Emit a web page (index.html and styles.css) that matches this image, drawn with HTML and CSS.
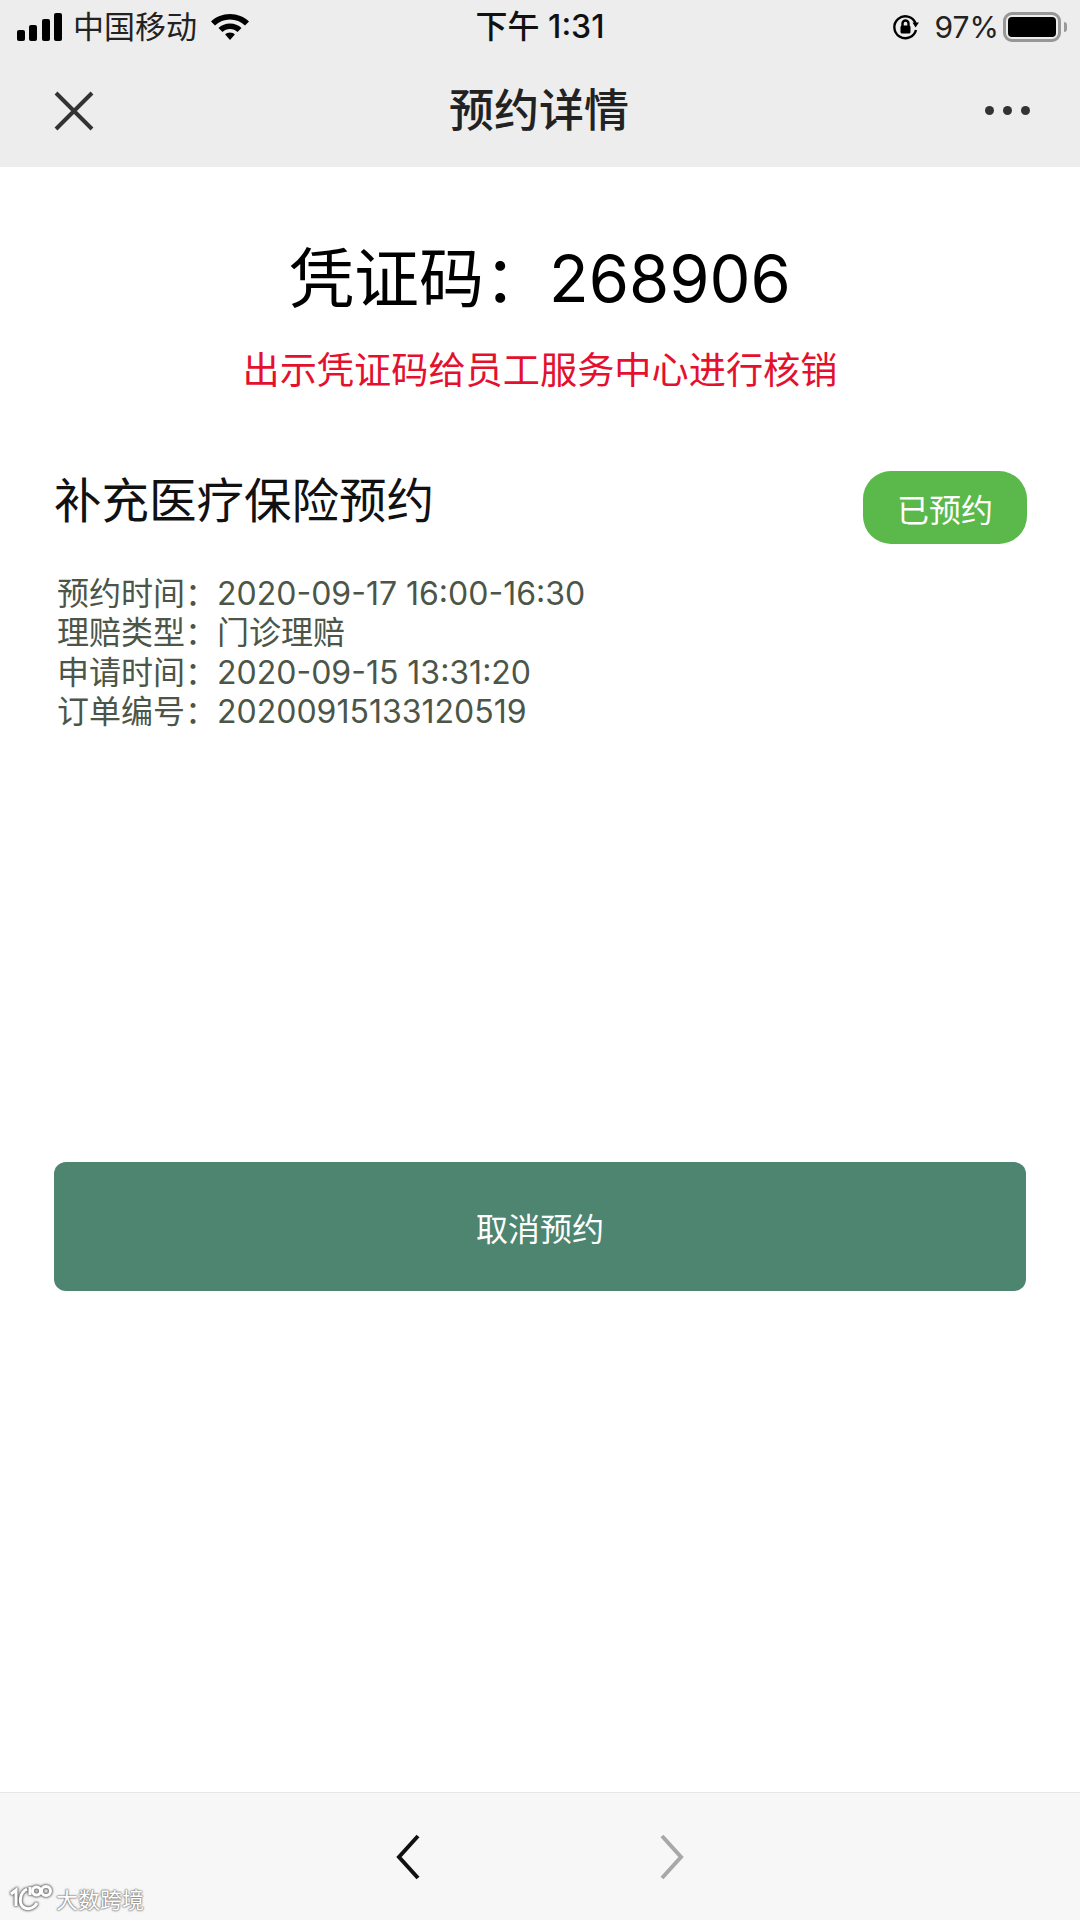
FILE: index.html
```html
<!DOCTYPE html>
<html lang="zh-CN">
<head>
    <meta charset="UTF-8">
    <meta name="viewport" content="width=device-width, initial-scale=1.0">
    <title>预约详情</title>
    <link rel="stylesheet" href="styles.css">
</head>
<body>
    <div class="top-bar">
        <div class="status-bar">
            <div class="status-left">
                <svg class="signal" width="46" height="28" viewBox="0 0 46 28">
                    <rect x="0" y="17" width="8" height="11" rx="2"/>
                    <rect x="12" y="12" width="8" height="16" rx="2"/>
                    <rect x="25" y="6" width="8" height="22" rx="2"/>
                    <rect x="37" y="0" width="8" height="28" rx="2"/>
                </svg>
                <span class="carrier">中国移动</span>
                <svg class="wifi" width="40" height="30" viewBox="0 0 40 30">
                    <path d="M20 2C12.500 2 6 4.800 1 9.500L5 13.500C9 9.800 14.200 7.500 20 7.500S31 9.800 35 13.500L39 9.500C34 4.800 27.500 2 20 2Z"/>
                    <path d="M20 11.500C15.500 11.500 11.500 13.200 8.500 16L12.500 20C14.500 18.200 17.100 17 20 17S25.500 18.200 27.500 20L31.500 16C28.500 13.200 24.500 11.500 20 11.500Z"/>
                    <path d="M20 20.500C18.100 20.500 16.400 21.200 15.200 22.400L20 28L24.800 22.400C23.600 21.200 21.900 20.500 20 20.500Z"/>
                </svg>
            </div>
            <div class="status-time">下午 1:31</div>
            <div class="status-right">
                <svg class="rotation-lock" width="28" height="28" viewBox="0 0 28 28">
                    <path class="rotation-ring" d="M23.500 10A11 11 0 1 0 24 17"/>
                    <path d="M20.500 9.500H27L23.500 14.500Z"/>
                    <rect x="8.500" y="12.500" width="10" height="8" rx="1.500"/>
                    <path class="rotation-ring" d="M10.500 13V10.500A3 3 0 0 1 16.500 10.500V13"/>
                </svg>
                <span class="battery-text">97%</span>
                <div class="battery">
                    <div class="battery-body"><div class="battery-level"></div></div>
                    <div class="battery-nub"></div>
                </div>
            </div>
        </div>
        <div class="nav-bar">
            <svg class="nav-close" width="40" height="40" viewBox="0 0 40 40">
                <path d="M2 2L38 38M38 2L2 38"/>
            </svg>
            <div class="nav-title">预约详情</div>
            <div class="nav-more"><span></span><span></span><span></span></div>
        </div>
    </div>

    <div class="content">
        <div class="code-title">凭证码：<span class="code-num">268906</span></div>
        <div class="code-tip">出示凭证码给员工服务中心进行核销</div>

        <div class="item-head">
            <div class="item-name">补充医疗保险预约</div>
            <div class="item-badge">已预约</div>
        </div>

        <div class="info-list">
            <div class="info-row"><span class="info-label">预约时间：</span><span class="info-value">2020-09-17 16:00-16:30</span></div>
            <div class="info-row"><span class="info-label">理赔类型：</span><span class="info-value">门诊理赔</span></div>
            <div class="info-row"><span class="info-label">申请时间：</span><span class="info-value">2020-09-15 13:31:20</span></div>
            <div class="info-row"><span class="info-label">订单编号：</span><span class="info-value">20200915133120519</span></div>
        </div>

        <div class="cancel-btn">取消预约</div>
    </div>

    <div class="bottom-bar">
        <svg class="nav-arrow" width="28" height="48" viewBox="0 0 28 48">
            <path d="M25 3L6 24L25 45"/>
        </svg>
        <svg class="nav-arrow disabled" width="28" height="48" viewBox="0 0 28 48">
            <path d="M3 3L22 24L3 45"/>
        </svg>
    </div>

    <!-- watermark over the bottom bar -->
    <div class="watermark">
        <svg width="44" height="28" viewBox="0 0 44 28">
            <path d="M2 10L7 6V22"/>
            <path d="M18 5C10 9 9 21 16 24C21 26 26 23 28 19"/>
            <path d="M21 3V11"/>
            <circle cx="27.500" cy="7" r="4"/>
            <circle cx="37" cy="7" r="4.500"/>
        </svg>
        <span>大数跨境</span>
    </div>
</body>
</html>
```

FILE: styles.css
```css
* {
    box-sizing: border-box;
    margin: 0;
    padding: 0;
}

body {
    width: 1080px;
    height: 1920px;
    position: relative;
    display: flex;
    flex-direction: column;
    background: #fff;
    font-family: Inter, "Noto Sans CJK SC", sans-serif;
    overflow: hidden;
}

.top-bar {
    height: 167px;
    background: #ededed;
}

/* status bar */
.status-bar {
    height: 54px;
    display: grid;
    grid-template-columns: 1fr auto 1fr;
    align-items: center;
    padding: 0 13px 0 17px;
    color: #000;
}

.status-left {
    display: flex;
    align-items: center;
}

.signal {
    margin-right: 10px;
}

.carrier {
    font-size: 31px;
    line-height: 36px;
    color: #222;
}

.wifi {
    margin-left: 13px;
}

.status-time {
    font-size: 32px;
    line-height: 36px;
    font-weight: 500;
    color: #111;
    margin-right: 4px;
}

.status-right {
    display: flex;
    align-items: center;
    justify-content: flex-end;
}

.rotation-lock {
    margin-right: 15px;
}

.rotation-ring {
    fill: none;
    stroke: #000;
    stroke-width: 2.400;
}

.battery-text {
    font-size: 30px;
    line-height: 36px;
    color: #222;
    margin-right: 4px;
}

.battery {
    display: flex;
    align-items: center;
}

.battery-body {
    width: 58px;
    height: 30px;
    padding: 2px;
    border: 3px solid #979797;
    border-radius: 9px;
}

.battery-level {
    height: 100%;
    background: #000;
    border-radius: 4px;
}

.battery-nub {
    width: 3px;
    height: 10px;
    margin-left: 3px;
    background: #9a9a9a;
    border-radius: 0 3px 3px 0;
}

/* title bar */
.nav-bar {
    height: 113px;
    display: flex;
    align-items: center;
    justify-content: space-between;
    position: relative;
    padding: 0 50px 0 54px;
}

.nav-close path {
    fill: none;
    stroke: #333;
    stroke-width: 4;
}

.nav-title {
    position: absolute;
    left: 0;
    right: 2px;
    text-align: center;
    font-size: 45px;
    line-height: 60px;
    font-weight: 500;
    color: #222;
}

.nav-more {
    display: flex;
    gap: 9px;
}

.nav-more span {
    width: 9px;
    height: 9px;
    border-radius: 50%;
    background: #333;
}

/* main content */
.content {
    flex: 1;
    display: flex;
    flex-direction: column;
    padding: 0 54px;
}

.code-title {
    margin-top: 72px;
    text-align: center;
    font-size: 65px;
    line-height: 80px;
    color: #000;
}

.code-tip {
    margin-top: 27px;
    text-align: center;
    font-size: 37.200px;
    line-height: 50px;
    color: #e5102e;
}

.item-head {
    margin-top: 75px;
    display: flex;
    justify-content: space-between;
    align-items: flex-start;
}

.item-name {
    font-size: 47.500px;
    line-height: 60px;
    color: #111;
}

.item-badge {
    width: 164px;
    height: 73px;
    margin-right: -1px;
    display: flex;
    align-items: center;
    justify-content: center;
    background: #5bb84a;
    border-radius: 28px;
    font-size: 32px;
    color: #fff;
}

.info-list {
    margin-top: 30px;
    padding-left: 3px;
}

.info-row {
    display: flex;
    font-size: 32px;
    line-height: 39.300px;
    color: #4b5548;
}

.info-label {
    width: 160px;
}

.cancel-btn {
    margin-top: 431px;
    height: 129px;
    display: flex;
    align-items: center;
    justify-content: center;
    background: #4d8571;
    border-radius: 12px;
    font-size: 32px;
    color: #fff;
}

/* bottom toolbar */
.bottom-bar {
    height: 128px;
    display: flex;
    justify-content: center;
    gap: 238px;
    padding-top: 40px;
    background: #f7f7f7;
    border-top: 1px solid #e6e6e6;
}

.nav-arrow path {
    fill: none;
    stroke: #111;
    stroke-width: 4;
}

.nav-arrow.disabled path {
    stroke: #a8a8a8;
}

.watermark {
    position: absolute;
    left: 9px;
    bottom: 6px;
    display: flex;
    align-items: center;
    gap: 3px;
    font-size: 22px;
    color: #fff;
    text-shadow: 0 0 2px #777, 0 0 2px #777, 0 0 1px #777;
}

.watermark svg {
    fill: none;
    stroke: #fff;
    stroke-width: 3;
    filter: drop-shadow(0 0 1px #666) drop-shadow(0 0 1px #666);
}
```
